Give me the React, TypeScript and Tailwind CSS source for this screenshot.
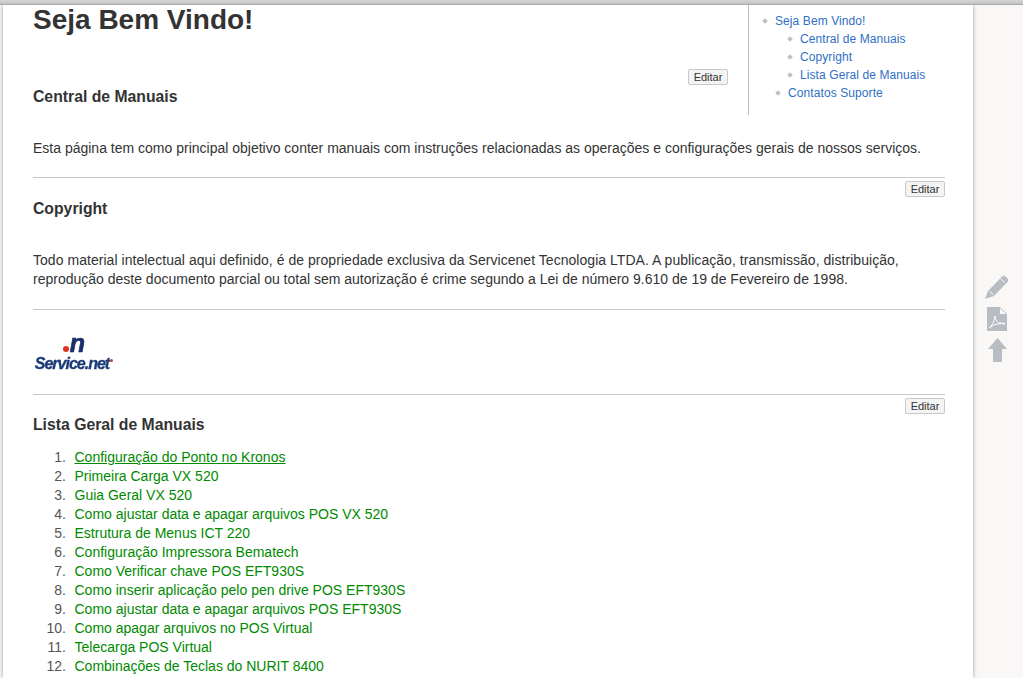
import React from "react";

const manuals = [
  "Configuração do Ponto no Kronos",
  "Primeira Carga VX 520",
  "Guia Geral VX 520",
  "Como ajustar data e apagar arquivos POS VX 520",
  "Estrutura de Menus ICT 220",
  "Configuração Impressora Bematech",
  "Como Verificar chave POS EFT930S",
  "Como inserir aplicação pelo pen drive POS EFT930S",
  "Como ajustar data e apagar arquivos POS EFT930S",
  "Como apagar arquivos no POS Virtual",
  "Telecarga POS Virtual",
  "Combinações de Teclas do NURIT 8400",
];

function Editar() {
  return (
    <button className="float-right h-[16px] w-[40px] rounded-[2px] border border-[#c8c8c8] bg-[#f4f4f4] text-center text-[11px] leading-[14px] text-[#333]">
      Editar
    </button>
  );
}

function TocItem({ label, indent }: { label: string; indent: string }) {
  return (
    <li className={`flex h-[18px] items-center ${indent}`}>
      <span className="mr-[8px] h-[4px] w-[4px] rotate-45 bg-[#c0c0c0]" />
      <a className="text-[12px] tracking-[0.09px] text-[#2f6fc4]">{label}</a>
    </li>
  );
}

function ServiceLogo() {
  return (
    <div className="flex h-[41px] w-[82px] flex-col items-center blur-[0.5px]">
      <div className="flex h-[25px] items-end">
        <span className="mb-[4px] mr-[1px] h-[6px] w-[6px] rounded-full bg-[#d9341f]" />
        <span className="text-[25px] font-bold italic leading-[25px] text-[#1c2f6b] [-webkit-text-stroke:0.7px_#1c2f6b]">n</span>
      </div>
      <div className="flex items-start text-[16px] font-bold italic leading-[16px] tracking-[-1px] text-[#1c3a78] [-webkit-text-stroke:0.3px_#1c3a78]">
        Service.net
        <span className="ml-[1px] mt-[3px] h-[3px] w-[3px] rounded-full bg-[#c8432f]" />
      </div>
    </div>
  );
}

function Side() {
  return (
    <aside className="flex w-[50px] flex-col items-center pr-[2px] pt-[268px] text-[#b8bcc3]">
      <svg width="26" height="28" viewBox="0 0 26 28" fill="currentColor">
        <path d="M1 26l3-8L18 3.500c1-1 2.500-1 3.500 0l2 2c1 1 1 2.500 0 3.500L10 23z" />
        <path d="M5.500 18l4 4" stroke="#f9f8f7" strokeWidth="1" />
        <path d="M16.500 5.500l4 4" stroke="#f9f8f7" strokeWidth="1" />
      </svg>
      <svg className="mt-[6px]" width="20" height="24" viewBox="0 0 20 24">
        <path d="M0 0h13l7 7v17H0z" fill="currentColor" />
        <path d="M13 1v6h6" fill="#f9f8f7" />
        <path d="M2 21c3-2 5-6 6-12 0 4 3 7 5 7 2 0 4 0 5 1-4-1-10 0-13 2z" fill="none" stroke="#fff" strokeWidth="1" />
      </svg>
      <svg className="mt-[7px]" width="19" height="24" viewBox="0 0 19 24" fill="currentColor">
        <path d="M9.500 0L19 11h-5v13H5V11H0z" />
      </svg>
    </aside>
  );
}

export default function App() {
  return (
    <div className="flex h-[678px] w-[1023px] flex-col overflow-hidden bg-[#f9f8f7] font-['Liberation_Sans',Arial,sans-serif] text-[14px] leading-[19px] text-[#333]">
      <div className="relative z-10 h-[5px] shrink-0 border-b border-[#a9a9a9] bg-gradient-to-b from-[#d4d4d4] to-[#c4c4c4]" />
      <div className="flex min-h-0 flex-1 pl-[3px]">
        <main className="w-[970px] bg-white pl-[30px] pr-[28px] shadow-[0_0_4px_rgba(0,0,0,0.4)]">
          <nav className="float-right ml-[20px] mr-[-28px] h-[110px] w-[225px] border-l border-[#bdbdbd] pt-[7px]">
            <ul>
              <TocItem label="Seja Bem Vindo!" indent="pl-[14px]" />
              <TocItem label="Central de Manuais" indent="pl-[39px]" />
              <TocItem label="Copyright" indent="pl-[39px]" />
              <TocItem label="Lista Geral de Manuais" indent="pl-[39px]" />
              <TocItem label="Contatos Suporte" indent="pl-[27px]" />
            </ul>
          </nav>
          <h1 className="text-[28px] font-bold leading-[30px]">Seja Bem Vindo!</h1>

          <div className="mt-[34px]">
            <Editar />
          </div>
          <h2 className="mt-[53px] text-[15.75px] font-bold leading-[18px]">Central de Manuais</h2>
          <p className="mt-[33px]">Esta página tem como principal objetivo conter manuais com instruções relacionadas as operações e configurações gerais de nossos serviços.</p>
          <hr className="mt-[19px] border-[#c8c8c8]" />
          <div className="mt-[3px]"><Editar /></div>
          <h2 className="pt-[19px] text-[15.75px] font-bold leading-[18px]">Copyright</h2>
          <p className="mt-[33px]"><span className="tracking-[0.04px]">Todo material intelectual aqui definido, é de propriedade exclusiva da Servicenet Tecnologia LTDA. A publicação, transmissão, distribuição,</span> reprodução deste documento parcial ou total sem autorização é crime segundo a Lei de número 9.610 de 19 de Fevereiro de 1998.</p>
          <hr className="mt-[20px] border-[#c8c8c8]" />
          <div className="mt-[21px]"><ServiceLogo /></div>
          <hr className="mt-[22px] border-[#c8c8c8]" />
          <div className="mt-[3px]"><Editar /></div>
          <h2 className="pt-[18px] text-[15.75px] font-bold leading-[18px]">Lista Geral de Manuais</h2>
          <ol className="mt-[14px]">
            {manuals.map((m, i) => (
              <li key={m} className="flex h-[19px]">
                <span className="w-[33px] text-right text-[#555]">{i + 1}.</span>
                <a className={`ml-[8.5px] text-[#008a00] ${i === 0 ? "underline" : ""}`}>{m}</a>
              </li>
            ))}
          </ol>
        </main>
        <Side />
      </div>
    </div>
  );
}
